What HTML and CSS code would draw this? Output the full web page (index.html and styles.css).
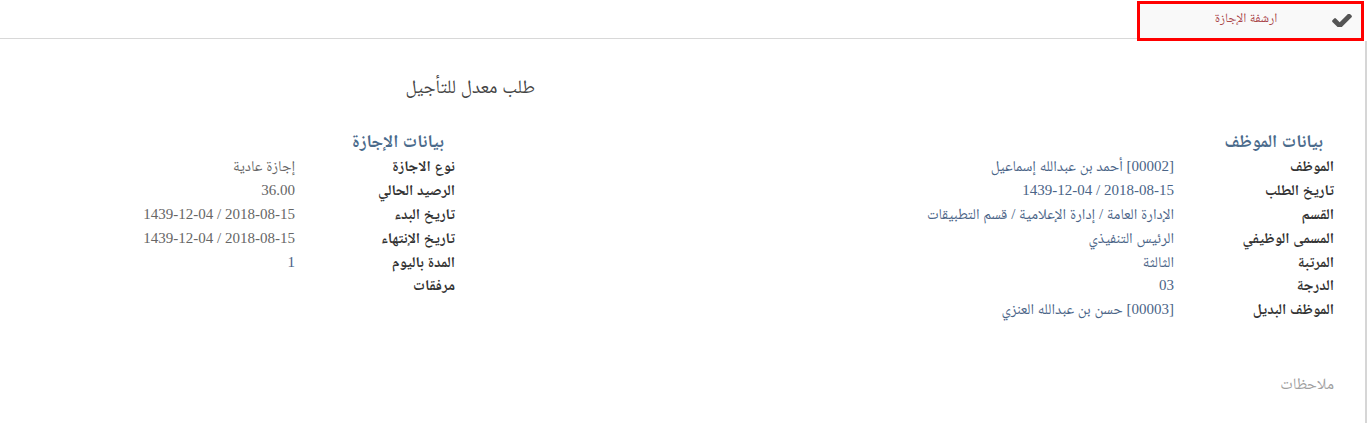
FILE: index.html
```html
<!DOCTYPE html>
<html lang="ar" dir="rtl">
  <head>
    <meta charset="UTF-8">
    <title>طلب معدل للتأجيل</title>
    <link rel="stylesheet" href="styles.css">
  </head>
  <body>
    <div class="topbar">
      <div class="tab">
        <svg class="check" width="20" height="13" viewBox="121 374 1550 1016">
          <path d="M1671 566q0 40-28 68l-724 724-136 136q-28 28-68 28t-68-28l-136-136-362-362q-28-28-28-68t28-68l136-136q28-28 68-28t68 28l294 295 656-657q28-28 68-28t68 28l136 136q28 28 28 68z" fill="#555555"/>
        </svg>
        <span class="tab-label">ارشفة الإجازة</span>
      </div>
      <div class="bar-rest"></div>
    </div>

    <div class="sheet">
      <h1 class="title">طلب معدل للتأجيل</h1>

      <div class="groups">
        <div class="group">
          <div class="group-title">بيانات الموظف</div>
          <div class="row"><span class="label">الموظف</span><span class="value link">[00002] أحمد بن عبدالله إسماعيل</span></div>
          <div class="row"><span class="label">تاريخ الطلب</span><span class="value link">2018-08-15 / 1439-12-04</span></div>
          <div class="row"><span class="label">القسم</span><span class="value link">الإدارة العامة / إدارة الإعلامية / قسم التطبيقات</span></div>
          <div class="row"><span class="label">المسمى الوظيفي</span><span class="value link">الرئيس التنفيذي</span></div>
          <div class="row"><span class="label">المرتبة</span><span class="value link">الثالثة</span></div>
          <div class="row"><span class="label">الدرجة</span><span class="value link">03</span></div>
          <div class="row"><span class="label">الموظف البديل</span><span class="value link">[00003] حسن بن عبدالله العنزي</span></div>
        </div>

        <div class="group">
          <div class="group-title">بيانات الإجازة</div>
          <div class="row"><span class="label">نوع الاجازة</span><span class="value muted">إجازة عادية</span></div>
          <div class="row"><span class="label">الرصيد الحالي</span><span class="value muted">36.00</span></div>
          <div class="row"><span class="label">تاريخ البدء</span><span class="value muted">2018-08-15 / 1439-12-04</span></div>
          <div class="row"><span class="label">تاريخ الإنتهاء</span><span class="value muted">2018-08-15 / 1439-12-04</span></div>
          <div class="row"><span class="label">المدة باليوم</span><span class="value link">1</span></div>
          <div class="row"><span class="label">مرفقات</span><span class="value"></span></div>
        </div>
      </div>

      <div class="notes">ملاحظات</div>
    </div>
  </body>
</html>
```

FILE: styles.css
```css
* {
  margin: 0;
  padding: 0;
  box-sizing: border-box;
}

body {
  direction: rtl;
  width: 1367px;
  height: 423px;
  overflow: hidden;
  background: #ffffff;
  color: #333333;
  font-family: "Liberation Serif", "Noto Naskh Arabic", serif;
  font-size: 15px;
}

.topbar {
  display: flex;
  align-items: flex-start;
  height: 41px;
  padding-right: 3px;
}

.topbar > .tab {
  width: 227px;
  height: 40px;
  margin-top: 1px;
  border: 3px solid #ff0000;
  background: #f9f9f9;
  display: flex;
  align-items: center;
  padding-right: 9px;
}

.topbar > .tab .check {
  margin-top: -2px;
}

.topbar > .tab .tab-label {
  flex-grow: 1;
  text-align: center;
  margin-left: 20px;
  margin-top: -4px;
  color: #a9464a;
  font-size: 13px;
}

.topbar > .bar-rest {
  flex-grow: 1;
  height: 39px;
  border-bottom: 1px solid #d8d8d8;
}

.sheet {
  width: 1366px;
  height: 382px;
  border-right: 2px solid #d6d6d6;
  padding-right: 31px;
}

.sheet > .title {
  font-size: 19px;
  font-weight: normal;
  color: #444444;
  margin-right: 799px;
  padding-top: 32px;
  height: 84px;
  line-height: 28px;
}

.groups {
  display: grid;
  grid-template-columns: 879px 1fr;
}

.group-title {
  font-size: 18px;
  font-weight: bold;
  color: #4b6b8c;
  margin-right: 11px;
  height: 28px;
  line-height: 28px;
  margin-top: 2px;
}

.row {
  display: flex;
  height: 23.8px;
  line-height: 23px;
  align-items: center;
}

.row > .label {
  width: 160px;
  font-weight: bold;
  color: #333333;
}

.row > .value {
  color: #555555;
}

.row > .value.link {
  color: #4a6487;
}

.row > .value.muted {
  color: #666666;
}

.notes {
  margin-top: 50px;
  color: #a0a0a0;
  font-size: 16px;
}
```
